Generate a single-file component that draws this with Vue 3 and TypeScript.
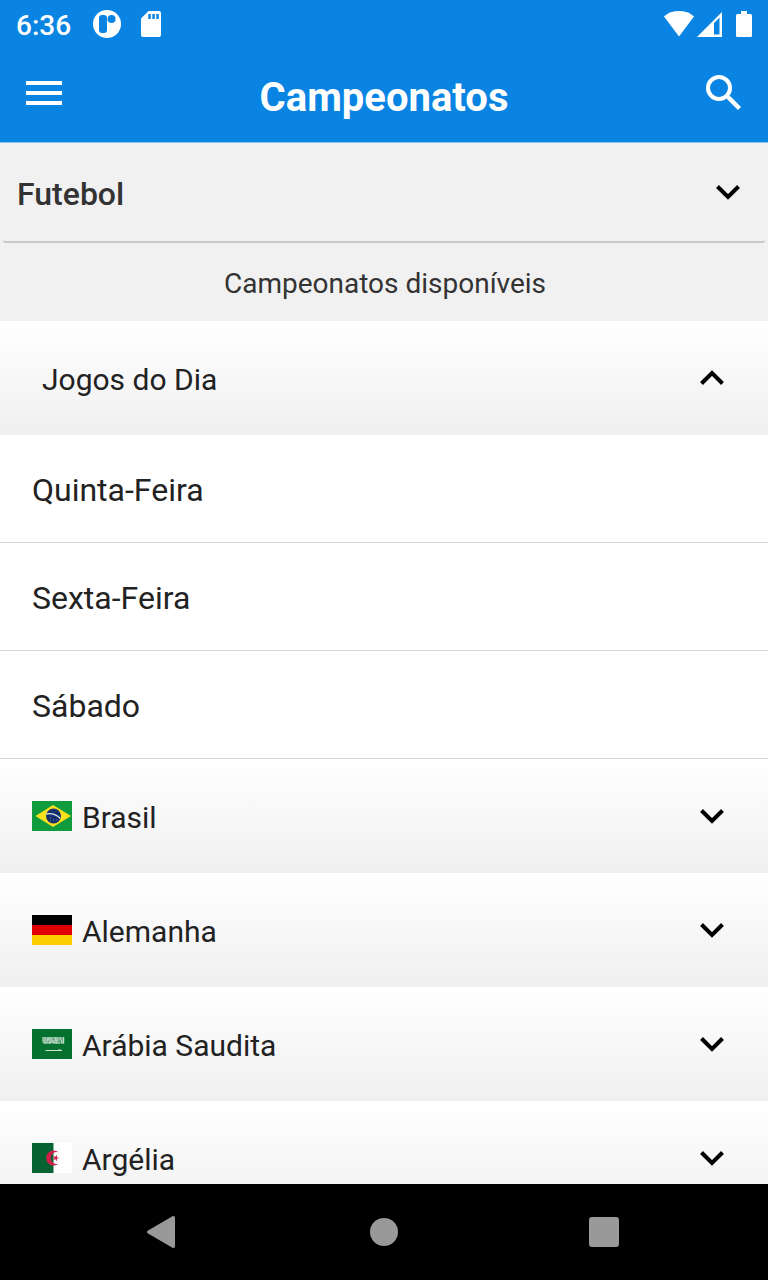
<script setup lang="ts">
import { ref } from 'vue'

interface Country {
  name: string
  flag: 'br' | 'de' | 'sa' | 'dz'
}

const sport = ref('Futebol')
const todayOpen = ref(true)
const opened = ref<string | null>(null)
const days: string[] = ['Quinta-Feira', 'Sexta-Feira', 'Sábado']
const countries: Country[] = [
  { name: 'Brasil', flag: 'br' },
  { name: 'Alemanha', flag: 'de' },
  { name: 'Arábia Saudita', flag: 'sa' },
  { name: 'Argélia', flag: 'dz' },
]

function toggle(name: string): void {
  opened.value = opened.value === name ? null : name
}
</script>

<template>
  <div class="screen">
    <div class="status">
      <div class="status-left">
        <time class="clock">6:36</time>
        <svg width="28" height="28" viewBox="0 0 28 28" aria-hidden="true">
          <circle cx="14" cy="14" r="14" fill="#fff" />
          <rect x="6" y="5" width="8" height="18" rx="3" fill="#0a84e3" />
          <circle cx="18.5" cy="9" r="4" fill="#0a84e3" />
        </svg>
        <svg width="20" height="26" viewBox="0 0 20 26" aria-hidden="true">
          <path d="M7.5 0H18a2 2 0 0 1 2 2v22a2 2 0 0 1-2 2H2a2 2 0 0 1-2-2V7.500z" fill="#fff" />
          <path d="M7.300 3h2.500v5H7.300zM11.300 3h2.500v5h-2.500zM15.300 3h2.500v5h-2.500z" fill="#0a84e3" />
        </svg>
      </div>
      <div class="status-right">
        <svg width="30" height="26" viewBox="0 0 30 26" aria-hidden="true">
          <path d="M0 5.500C8-1.800 22-1.800 30 5.500L15 25.500z" fill="#fff" />
        </svg>
        <svg class="signal" width="25" height="26" viewBox="0 0 25 26" aria-hidden="true">
          <path d="M25 1v25H0zM22.500 6.500L17 12V23.500h5.500z" fill="#fff" fill-rule="evenodd" />
        </svg>
        <svg width="16" height="26" viewBox="0 0 16 26" aria-hidden="true">
          <path d="M5 0h6v3h3.500A1.500 1.500 0 0 1 16 4.500v20a1.500 1.500 0 0 1-1.500 1.500h-13A1.500 1.500 0 0 1 0 24.500v-20A1.500 1.500 0 0 1 1.500 3H5z" fill="#fff" />
        </svg>
      </div>
    </div>

    <header class="bar">
      <button type="button" aria-label="Menu">
        <svg width="36" height="24" viewBox="0 0 36 24"><path d="M0 0h36v4H0zM0 10h36v4H0zM0 20h36v4H0z" fill="#fff" /></svg>
      </button>
      <h1>Campeonatos</h1>
      <button type="button" aria-label="Buscar">
        <svg width="36" height="36" viewBox="0 0 36 36" fill="none" stroke="#fff" stroke-width="4">
          <circle cx="13" cy="13" r="11" />
          <path d="M21 21l2.500 2.500" stroke-width="3" />
          <path d="M22.500 22.500L33.500 33.500" stroke-width="4.500" />
        </svg>
      </button>
    </header>

    <main class="content">
      <div class="sport">
        <select v-model="sport" aria-label="Esporte">
          <option>Futebol</option>
        </select>
        <svg class="chevron" viewBox="0 0 24 16"><path d="M1.500 2.500L12 13L22.500 2.500" /></svg>
      </div>
      <h2>Campeonatos disponíveis</h2>

      <section>
        <button type="button" class="group today" :aria-expanded="todayOpen" @click="todayOpen = !todayOpen">
          <span>Jogos do Dia</span>
          <svg class="chevron" :class="{ up: todayOpen }" viewBox="0 0 24 16"><path d="M1.500 2.500L12 13L22.500 2.500" /></svg>
        </button>
        <ul v-if="todayOpen">
          <li v-for="day in days" :key="day"><a href="#">{{ day }}</a></li>
        </ul>
      </section>

      <button
        v-for="country in countries"
        :key="country.name"
        type="button"
        class="group"
        :aria-expanded="opened === country.name"
        @click="toggle(country.name)"
      >
        <svg class="flag" viewBox="0 0 40 30" aria-hidden="true">
          <template v-if="country.flag === 'br'">
            <path d="M0 0h40v30H0z" fill="#129b3c" />
            <path d="M3.500 15L21 4l18 11-18 11z" fill="#fee01c" />
            <circle cx="21.500" cy="15" r="7.500" fill="#16306f" />
            <path d="M14.300 13q8-1.500 14 4.500" fill="none" stroke="#d4e4e8" stroke-width="1.300" />
            <path d="M18 17h1M21 19h1M24 19h1M18 20h1" stroke="#6b87a8" stroke-width="1" />
          </template>
          <template v-else-if="country.flag === 'de'">
            <path d="M0 0h40v10H0z" fill="#000" />
            <path d="M0 10h40v10H0z" fill="#e00000" />
            <path d="M0 20h40v10H0z" fill="#ffce00" />
          </template>
          <template v-else-if="country.flag === 'sa'">
            <path d="M0 0h40v30H0z" fill="#04712f" />
            <path d="M10.500 8h22v6.500h-22z" fill="#5fa379" />
            <path
              d="M11 8v4q0 2 3 2M13 8v4h3V8M14 10h4M18 8v6M17 13h5M20 8v4h3M22 8l3 5M24 8v6h4M26 8v4M28 8l2 5M31.500 8v6M29 14h3M12 14h7M21 14h4"
              fill="none" stroke="#c3dfcc" stroke-width="1"
            />
            <path d="M13.500 21.500H30M26 21h3" fill="none" stroke="#c9e2d0" stroke-width="1" />
          </template>
          <template v-else>
            <path d="M0 0h40v30H0z" fill="#fff" />
            <path d="M0 0h21.500v30H0z" fill="#066233" />
            <path d="M26.500 9.300A7.500 7.500 0 1 0 26.500 20.700A6 6 0 1 1 26.500 9.300z" fill="#d21f4a" />
            <path d="M27.500 15l-2.600.8.100 2.700-1.600-2.200-2.600.9 1.600-2.200-1.600-2.200 2.600.9 1.600-2.200-.1 2.700z" fill="#d21f4a" />
          </template>
        </svg>
        <span>{{ country.name }}</span>
        <svg class="chevron" :class="{ up: opened === country.name }" viewBox="0 0 24 16"><path d="M1.500 2.500L12 13L22.500 2.500" /></svg>
      </button>
    </main>

    <nav class="system">
      <button type="button" aria-label="Voltar">
        <svg width="32" height="32" viewBox="0 0 32 32"><path d="M0 14.500L24.500.3Q27-.8 27 2v28q0 2.800-2.500 1.700L0 17.500q-2-1.500 0-3z" fill="#999" /></svg>
      </button>
      <button type="button" aria-label="Início">
        <svg width="32" height="32" viewBox="0 0 32 32"><circle cx="16" cy="16" r="14" fill="#999" /></svg>
      </button>
      <button type="button" aria-label="Recentes">
        <svg width="32" height="32" viewBox="0 0 32 32"><rect x="1" y="1" width="30" height="30" rx="3" fill="#999" /></svg>
      </button>
    </nav>
  </div>
</template>

<style>
body {
  margin: 0;
}
</style>

<style scoped>
.screen {
  display: flex;
  flex-direction: column;
  height: 100vh;
  overflow: hidden;
  background: #f1f1f1;
  color: #222;
  font-family: Roboto, "Noto Sans", sans-serif;
}

button {
  margin: 0;
  padding: 0;
  border: 0;
  background: none;
  color: inherit;
  font: inherit;
  cursor: pointer;
}

svg {
  display: block;
  flex: none;
  overflow: visible;
}

.status,
.bar {
  display: flex;
  flex: none;
  align-items: center;
  justify-content: space-between;
  background: #0a84e3;
  color: #fff;
}

.status {
  height: 48px;
  padding: 0 16px;
}

.status-left,
.status-right {
  display: flex;
  align-items: center;
}

.status-left {
  gap: 20px;
}

.clock {
  padding: 4px 2px 0 0;
  font-size: 28px;
  font-weight: 500;
  line-height: 32px;
}

.signal {
  margin: 0 14px 0 3px;
}

.bar {
  box-sizing: border-box;
  height: 95px;
  padding: 0 26px 4px;
  border-bottom: 1px solid #8cc4f0;
}

h1 {
  margin: 0;
  padding-top: 10px;
  font-size: 40px;
  font-weight: 700;
  line-height: 48px;
}

.content {
  flex: 1;
  min-height: 0;
  overflow-y: auto;
  scrollbar-width: none;
}

.sport {
  display: flex;
  align-items: center;
  height: 98px;
  margin: 0 3px;
  padding-right: 25px;
  border-bottom: 2px solid #c8c8c8;
  border-radius: 3px;
}

select {
  flex: 1;
  height: 100%;
  margin-right: -24px;
  padding: 4px 24px 0 14px;
  border: 0;
  background: none;
  appearance: none;
  color: #333;
  font: 500 32px/40px Roboto, "Noto Sans", sans-serif;
}

.chevron {
  width: 24px;
  height: 16px;
  margin-left: auto;
  fill: none;
  stroke: #000;
  stroke-width: 4;
  pointer-events: none;
}

.chevron.up {
  transform: rotate(180deg);
}

h2 {
  margin: 0;
  padding: 22px 0 18px 2px;
  color: #333;
  font-size: 28px;
  font-weight: 400;
  line-height: 38px;
  text-align: center;
}

.group {
  display: flex;
  align-items: center;
  gap: 10px;
  width: 100%;
  height: 114px;
  padding: 0 44px 0 32px;
  background: linear-gradient(#fff, #f0f0f0);
  font-size: 30px;
  line-height: 36px;
  text-align: left;
}

.group span {
  padding-top: 3px;
}

.today {
  padding-left: 42px;
}

.flag {
  width: 40px;
  height: 30px;
}

ul {
  margin: 0;
  padding: 0;
  list-style: none;
}

li {
  border-bottom: 1px solid #d8d8d8;
  background: #fff;
}

li a {
  display: block;
  padding: 35px 32px 32px;
  color: inherit;
  font-size: 32px;
  line-height: 40px;
  text-decoration: none;
}

.system {
  display: flex;
  flex: none;
  align-items: center;
  justify-content: center;
  gap: 124px;
  height: 96px;
  background: #000;
}

.system button {
  display: grid;
  place-items: center;
  width: 96px;
  height: 96px;
}
</style>
